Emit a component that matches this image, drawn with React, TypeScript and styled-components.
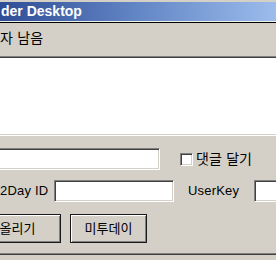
import React from "react";
import styled, { createGlobalStyle } from "styled-components";

const Global = createGlobalStyle`
  html, body { margin: 0; padding: 0; background: #d4d0c8; }
  body { font-family: "DejaVu Sans", "Noto Sans CJK KR", sans-serif; }
`;

const Window = styled.div`
  width: 276px;
  height: 260px;
  overflow: hidden;
  background: #d4d0c8;
  display: flex;
  flex-direction: column;
  padding-top: 2px;
  box-sizing: border-box;
`;

const TitleBar = styled.div`
  height: 19px;
  flex: none;
  background: linear-gradient(90deg, #2f4d96 0%, #6386c5 50%, #9cbcec 100%);
  color: #fff;
  font-family: "Liberation Sans", Arial, sans-serif;
  font-weight: bold;
  font-size: 14px;
  line-height: 19px;
  padding-left: 1px;
  border-bottom: 1px solid #f0efea;
  white-space: nowrap;
`;

const Rule = styled.div<{ $top: string; $bottom?: string; $mt?: number }>`
  height: 0;
  flex: none;
  margin-top: ${(p) => p.$mt ?? 0}px;
  border-top: 1px solid ${(p) => p.$top};
  ${(p) => (p.$bottom ? `border-bottom: 1px solid ${p.$bottom};` : "")}
`;

const CounterRow = styled.div`
  height: 33px;
  flex: none;
  display: flex;
  align-items: center;
  font-size: 14px;
  line-height: 16px;
  color: #000;
  padding-bottom: 4px;
  box-sizing: border-box;
`;

const Sunken = `
  box-sizing: border-box;
  background: #fff;
  border-top: 1px solid #808080;
  border-left: 1px solid #808080;
  border-bottom: 1px solid #fff;
  border-right: 1px solid #fff;
  box-shadow: inset 1px 1px #404040, inset -1px -1px #d4d0c8;
`;

const Editor = styled.div`
  ${Sunken}
  height: 80px;
  flex: none;
  margin: 0 -6px;
`;

const FormRow = styled.div<{ $mt: number; $ml?: number }>`
  display: flex;
  align-items: center;
  flex: none;
  margin-top: ${(p) => p.$mt}px;
  margin-left: ${(p) => p.$ml ?? 0}px;
  white-space: nowrap;
`;

const Field = styled.div<{ $w: number; $h?: number; $ml?: number }>`
  ${Sunken}
  flex: none;
  width: ${(p) => p.$w}px;
  height: ${(p) => p.$h ?? 22}px;
  margin-left: ${(p) => p.$ml ?? 0}px;
`;

const CheckBox = styled.div`
  ${Sunken}
  width: 13px;
  height: 13px;
  flex: none;
  margin-left: 20px;
`;

const Label = styled.span<{ $ml?: number; $w?: number; $size?: number }>`
  font-size: ${(p) => p.$size ?? 13}px;
  line-height: 16px;
  color: #000;
  margin-left: ${(p) => p.$ml ?? 0}px;
  ${(p) => (p.$w ? `width: ${p.$w}px; flex: none;` : "")}
`;

const FieldLabel = styled.span<{ $ml?: number; $w: number }>`
  font-family: "Liberation Sans", Arial, sans-serif;
  font-size: 13px;
  letter-spacing: 0.2px;
  line-height: 16px;
  color: #000;
  flex: none;
  width: ${(p) => p.$w}px;
  margin-left: ${(p) => p.$ml ?? 0}px;
`;

const Button = styled.button<{ $w: number; $ml?: number }>`
  flex: none;
  width: ${(p) => p.$w}px;
  height: 29px;
  margin-left: ${(p) => p.$ml ?? 0}px;
  padding: 0;
  background: #d4d0c8;
  border: 1px solid #1a1a1a;
  box-shadow: inset 1px 1px #fff, inset -1px -1px #808080;
  font-family: "DejaVu Sans", "Noto Sans CJK KR", sans-serif;
  font-size: 13px;
  color: #000;
  line-height: 16px;
`;

export default function App() {
  return (
    <>
      <Global />
      <Window>
        <TitleBar>der Desktop</TitleBar>
        <Rule $top="#000" />
        <CounterRow>자 남음</CounterRow>
        <Editor />
        <FormRow $mt={12} $ml={-4}>
          <Field $w={164} />
          <CheckBox />
          <Label $ml={3} $size={14}>댓글 달기</Label>
        </FormRow>
        <FormRow $mt={10}>
          <FieldLabel $w={54}>2Day ID</FieldLabel>
          <Field $w={120} />
          <FieldLabel $ml={14} $w={66}>UserKey</FieldLabel>
          <Field $w={40} />
        </FormRow>
        <FormRow $mt={12} $ml={-26}>
          <Button $w={87}>올리기</Button>
          <Button $w={77} $ml={9}>미투데이</Button>
        </FormRow>
        <Rule $top="#808080" $bottom="#404040" $mt={10} />
      </Window>
    </>
  );
}
